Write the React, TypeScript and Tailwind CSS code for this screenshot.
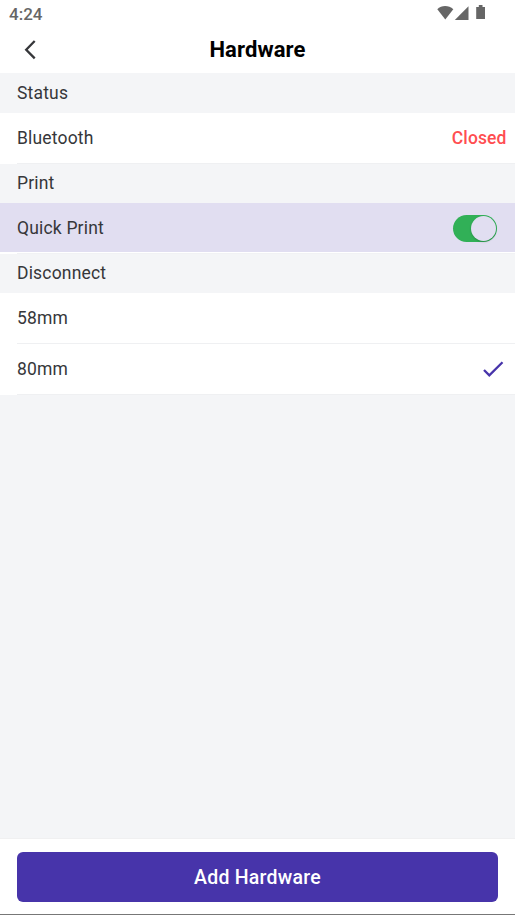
import React from "react";

function SectionTitle({ children, className }: { children: React.ReactNode; className: string }) {
  return <h2 className={`flex shrink-0 items-center bg-[#f4f5f7] pl-[17px] ${className}`}>{children}</h2>;
}

function Row({ label, children }: { label: string; children?: React.ReactNode }) {
  return (
    <div className="h-[51px] shrink-0 bg-white pl-[17px]">
      <div className="flex h-full items-center justify-between border-b border-[#eff0f2]">
        <span>{label}</span>
        {children}
      </div>
    </div>
  );
}

export default function App() {
  return (
    <div className="flex h-[915px] w-[515px] flex-col overflow-hidden bg-[#f4f5f7] font-['Roboto',sans-serif] text-[17.5px] leading-[22px] tracking-[0.18px] text-[#36373a]">
      <header className="h-[73px] shrink-0 bg-white">
        <div className="flex h-[26px] items-center justify-between pr-[29px] pl-[9px] text-[#666]">
          <span className="pt-px text-[17px] font-medium tracking-normal">4:24</span>
          <svg width="50" height="26" viewBox="0 0 50 26" fill="#666">
            <path d="M1.300 9.200C5.500 4.900 12.700 4.900 17.300 9.200L9.300 19.500Z" />
            <path d="M18.800 20L32.500 6.300V20Z" />
            <path d="M40.200 7h2.600V5h3.700v2H49v12h-8.800z" />
          </svg>
        </div>
        <div className="grid h-[47px] grid-cols-[60px_1fr_60px] items-center">
          <button aria-label="Back" className="pl-[23px]">
            <svg width="14" height="22" viewBox="0 0 14 22" fill="none" stroke="#36373a" strokeWidth="2.3">
              <path d="M11.700 2L3.200 10.700l8.500 8.700" />
            </svg>
          </button>
          <h1 className="text-center text-[22px] font-bold tracking-[0.1px] text-black">Hardware</h1>
        </div>
      </header>

      <main className="flex min-h-0 flex-1 flex-col">
        <SectionTitle className="h-10">Status</SectionTitle>
        <Row label="Bluetooth">
          <span className="pr-[8.500px] font-medium tracking-[0.1px] text-[#ff4d50]">Closed</span>
        </Row>
        <SectionTitle className="h-[39px] pb-[2px]">Print</SectionTitle>
        <div className="h-[51px] shrink-0 bg-white">
          <div className="flex h-[49px] items-center justify-between bg-[#e1def1] pr-[18px] pl-[17px]">
            <span>Quick Print</span>
            <button role="switch" aria-checked="true" aria-label="Quick Print" className="mt-[2px] flex h-[27px] w-11 items-center justify-end rounded-full bg-[#31b057] pr-px">
              <span className="h-[25px] w-[25px] rounded-full bg-[#e1def1] shadow-[0_1px_2px_#0003]" />
            </button>
          </div>
          <div className="mt-px ml-[17px] h-px bg-[#f1f2f4]" />
        </div>
        <SectionTitle className="h-[39px] pb-[2px]">Disconnect</SectionTitle>
        <Row label="58mm" />
        <Row label="80mm">
          <svg className="mr-[11px]" width="22" height="18" viewBox="0 0 22 18" fill="none" stroke="#4734aa" strokeWidth="2.3">
            <path d="M2 10l5.300 5.300L20.500 2.300" />
          </svg>
        </Row>
      </main>

      <footer className="h-[77px] shrink-0 border-t border-b border-t-[#f0f0f1] border-b-[#777] bg-white px-[17px] pt-[13px]">
        <button className="h-[50px] w-full rounded-md bg-[#4734aa] pt-px text-[19.5px] font-medium tracking-[0.24px] text-white">Add Hardware</button>
      </footer>
    </div>
  );
}
